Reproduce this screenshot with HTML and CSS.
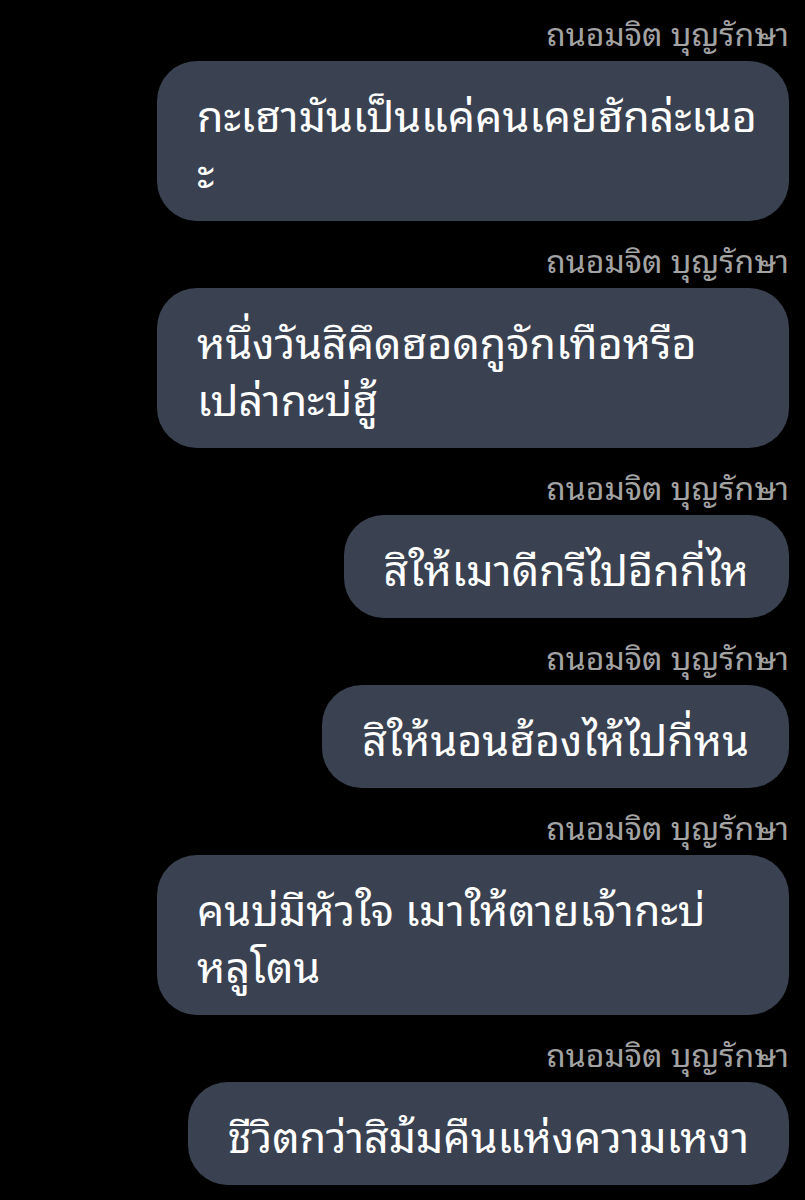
FILE: index.html
```html
<!DOCTYPE html>
<html lang="th">
<head>
<meta charset="utf-8">
<link rel="stylesheet" href="styles.css">
</head>
<body>
<div class="chat">
  <div class="msg">
    <div class="name">ถนอมจิต บุญรักษา</div>
    <div class="bubble wide">กะเฮามันเป็นแค่คนเคยฮักล่ะเนอ<br>ะ</div>
  </div>
  <div class="msg">
    <div class="name">ถนอมจิต บุญรักษา</div>
    <div class="bubble wide">หนึ่งวันสิคึดฮอดกูจักเทือหรือ<br>เปล่ากะบ่ฮู้</div>
  </div>
  <div class="msg">
    <div class="name">ถนอมจิต บุญรักษา</div>
    <div class="bubble">สิให้เมาดีกรีไปอีกกี่ไห</div>
  </div>
  <div class="msg">
    <div class="name">ถนอมจิต บุญรักษา</div>
    <div class="bubble">สิให้นอนฮ้องไห้ไปกี่หน</div>
  </div>
  <div class="msg">
    <div class="name">ถนอมจิต บุญรักษา</div>
    <div class="bubble wide">คนบ่มีหัวใจ เมาให้ตายเจ้ากะบ่<br>หลูโตน</div>
  </div>
  <div class="msg">
    <div class="name">ถนอมจิต บุญรักษา</div>
    <div class="bubble">ชีวิตกว่าสิม้มคืนแห่งความเหงา</div>
  </div>
</div>
</body>
</html>
```

FILE: styles.css
```css
html, body {
  margin: 0;
  padding: 0;
  background: #000;
}
body {
  font-family: "Noto Sans Thai Looped", "Noto Sans Thai UI", "Loma", "Waree", "Garuda", "Tlwg Typo", "Noto Sans Thai", "Noto Sans", sans-serif;
  color: #fff;
}
.chat {
  display: flex;
  flex-direction: column;
  align-items: flex-end;
  padding: 14px 16px 0 0;
}
.msg {
  display: flex;
  flex-direction: column;
  align-items: flex-end;
  margin-bottom: 20px;
}
.name {
  font-size: 32px;
  line-height: 36px;
  color: #a3a3a3;
  margin-bottom: 11px;
}
.bubble {
  background: #3a4251;
  border-radius: 40px;
  padding: 23px 40px;
  font-size: 43px;
  line-height: 57px;
  box-sizing: content-box;
  white-space: nowrap;
}
.bubble.wide {
  width: 552px;
}
```
